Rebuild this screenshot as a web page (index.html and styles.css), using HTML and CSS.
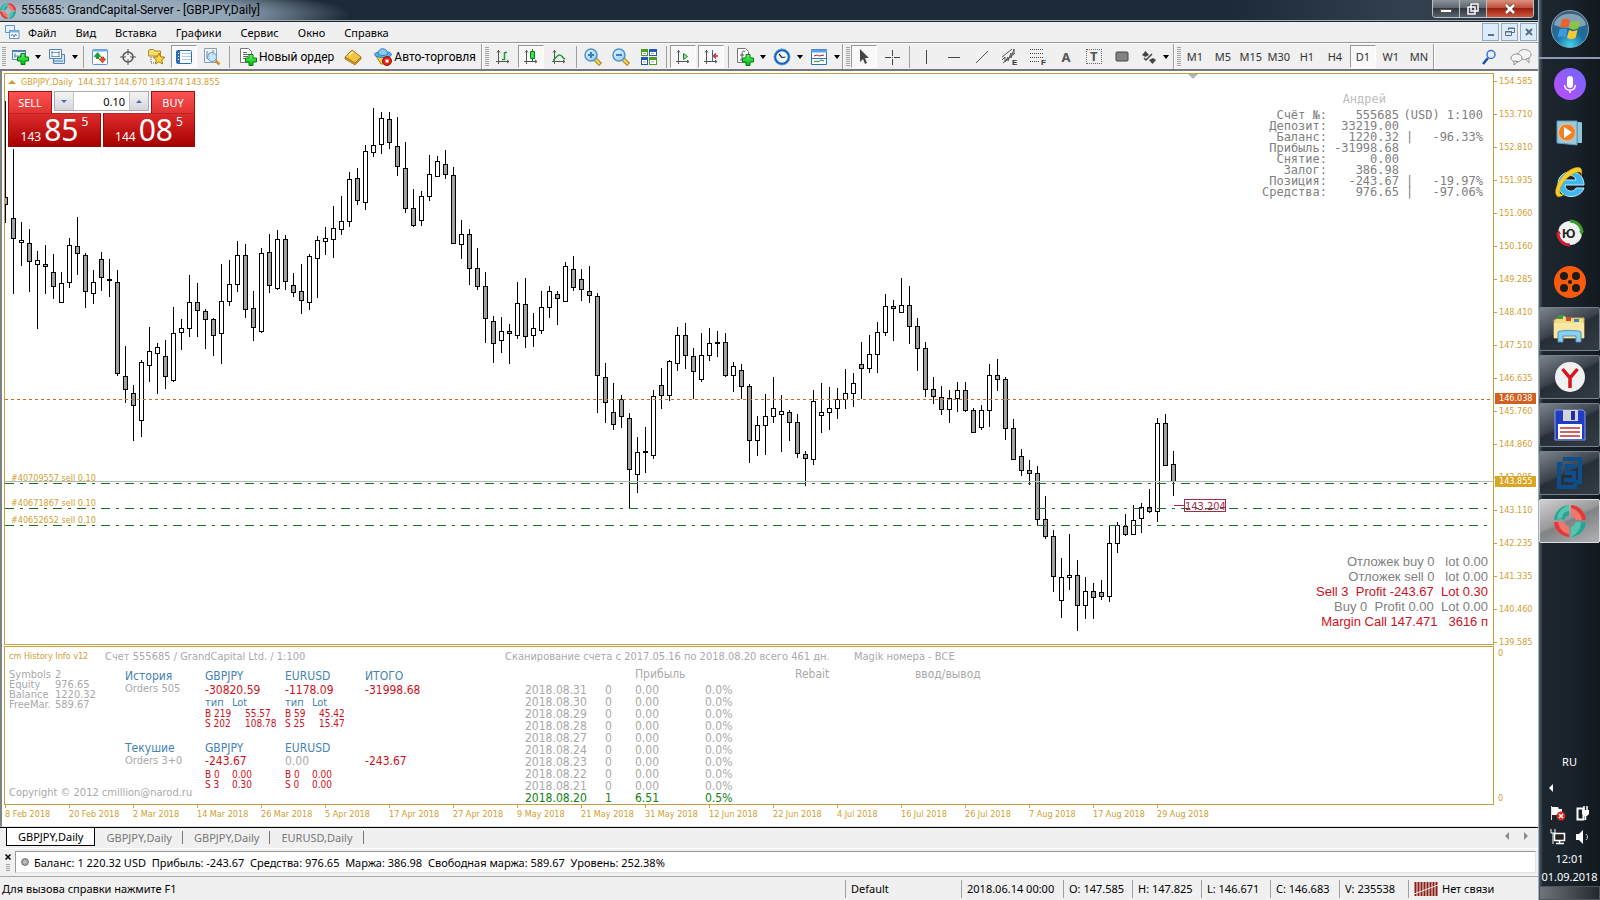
FILE: index.html
```html
<!DOCTYPE html>
<html lang="ru">
<head>
    <meta charset="UTF-8">
    <meta name="viewport" content="width=device-width, initial-scale=1.0">
    <title>555685: GrandCapital-Server - [GBPJPY,Daily]</title>
    <link rel="stylesheet" href="styles.css">
</head>
<body>
    <!-- shared drawings -->
    <svg class="defs" width="0" height="0" aria-hidden="true">
        <defs>
            <linearGradient id="plusFill" x1="0" y1="0" x2="0" y2="1"><stop offset="0" stop-color="#5dff5d"/><stop offset="1" stop-color="#00b418"/></linearGradient>
            <linearGradient id="lensFill" x1="0" y1="0" x2="1" y2="1"><stop offset="0" stop-color="#eaf7ff"/><stop offset="1" stop-color="#8cc8f4"/></linearGradient>
            <symbol id="logo" viewBox="0 0 32 32">
                <path d="M15 0A16 16 0 0 0 0 15l7-1 3 1a8 8 0 0 1 5-5z" fill="#27a398"/>
                <path d="M15 0C8 2 3 8 3 14l5-1a8 8 0 0 1 7-7z" fill="#54c4ae"/>
                <path d="M17 0a16 16 0 0 1 15 15H22a8 8 0 0 0-5-5z" fill="#f1766b"/>
                <path d="M17 0a16 16 0 0 1 15 15h-4C27 9 23 4 17 3z" fill="#dd3b3c"/>
                <path d="M32 17a16 16 0 0 1-15 15V22a8 8 0 0 0 5-5z" fill="#54c4ae"/>
                <path d="M32 17a16 16 0 0 1-15 15c6-3 10-8 10-15z" fill="#27a398"/>
                <path d="M0 17a16 16 0 0 0 15 15V22a8 8 0 0 1-5-5z" fill="#f1766b"/>
                <path d="M0 17a16 16 0 0 0 15 15v-3C9 28 5 23 4 17z" fill="#dd3b3c"/>
            </symbol>
            <symbol id="plus" viewBox="0 0 12 12">
                <path d="M4 .5h4V4h3.500v4H8v3.500H4V8H.5V4H4z" fill="url(#plusFill)" stroke="#087a14"/>
            </symbol>
            <symbol id="axes" viewBox="0 0 16 16">
                <path d="M3.500 1v14M1 12.500h13M2 3.500l1.500-2 1.500 2M12 11l2 1.500-2 1.500" fill="none" stroke="#555"/>
            </symbol>
        </defs>
    </svg>

    <div class="window">
        <header class="titlebar">
            <svg class="title-logo" width="16" height="16"><use href="#logo"/></svg>
            <h1>555685: GrandCapital-Server - [GBPJPY,Daily]</h1>
            <div class="window-buttons">
                <button type="button" aria-label="Свернуть"><svg width="12" height="12"><rect x=".5" y="6.500" width="11" height="3" fill="#fff" stroke="#555"/></svg></button>
                <button type="button" aria-label="Восстановить"><svg width="12" height="12"><path d="M4 1h7v7H4z M1 4h7v7H1z" fill="none" stroke="#445" stroke-width="3"/><path d="M4 1h7v7H4z M1 4h7v7H1z" fill="none" stroke="#fff" stroke-width="1.500"/></svg></button>
                <button type="button" class="close" aria-label="Закрыть"><svg width="12" height="10"><path d="M2 1l8 8M10 1L2 9" stroke="#533" stroke-width="4"/><path d="M2 1l8 8M10 1L2 9" stroke="#fff" stroke-width="2.500"/></svg></button>
            </div>
        </header>

        <nav class="menubar">
            <svg class="menu-icon" width="15" height="15"><path d="M.5.5h9v7h-9z" fill="#e6f2fd" stroke="#5d93c8"/><path d="M4.500 5.500h9.500v8H4.500z" fill="#fff" stroke="#5d93c8"/><path d="M5 6.500h9" stroke="#7fb0e0" stroke-width="2"/><path d="M6 11l1.500-2 1.500 3 1.500-3 1 2" fill="none" stroke="#4a7eb8"/></svg>
            <a href="#">Файл</a>
            <a href="#">Вид</a>
            <a href="#">Вставка</a>
            <a href="#">Графики</a>
            <a href="#">Сервис</a>
            <a href="#">Окно</a>
            <a href="#">Справка</a>
            <div class="mdi-buttons">
                <button type="button" aria-label="Свернуть окно"><svg width="10" height="10"><path d="M2 8h6" stroke="#5c6f82" stroke-width="2"/></svg></button>
                <button type="button" aria-label="Восстановить окно"><svg width="10" height="10"><path d="M3.500 3V1h6v4.500H7M.5 4.500h6v4h-6z" fill="none" stroke="#5c6f82"/><path d="M3 1.500h7M0 5h7" stroke="#5c6f82"/></svg></button>
                <button type="button" aria-label="Закрыть окно"><svg width="10" height="10"><path d="M2 2l6 6M8 2L2 8" stroke="#5c6f82" stroke-width="2"/></svg></button>
            </div>
        </nav>

        <div class="toolbar">
            <div class="band">
                <span class="grip"></span>
                <button type="button" class="tool drop" aria-label="Новый график"><svg width="18" height="18"><path d="M1.500 2.500h13v9h-13z" fill="#eef6fd" stroke="#4f83b8"/><path d="M1 3h14" stroke="#4f83b8" stroke-width="2"/><path d="M4 5v5M3 8h8M9 7l2 1-2 1" fill="none" stroke="#6a8aa8"/><use href="#plus" x="6" y="5" width="12" height="12"/></svg></button>
                <button type="button" class="tool drop" aria-label="Профили"><svg width="18" height="18"><path d="M5.500 6.500h11v9h-11z" fill="#cfe3f5" stroke="#4f83b8"/><path d="M1.500 1.500h12v9h-12z" fill="#f2f8fd" stroke="#4f83b8"/><path d="M4 3v6M11 3v6M3 4.500h9M3 8.500h9" stroke="#7a98b5"/><path d="M5 13h10" stroke="#4f83b8"/></svg></button>
                <span class="sep"></span>
                <button type="button" class="tool" aria-label="Обзор рынка"><svg width="16" height="16"><rect x=".5" y=".5" width="15" height="15" rx="1" fill="#fff" stroke="#5a9bd8"/><path d="M1 1.500h14" stroke="#6cb0ec" stroke-width="2"/><path d="M2 7.500l3.500-4 3.500 4H7v2H4v-2z" fill="#18a828" stroke="#0a6a14" stroke-width=".5"/><path d="M7 10l3.500 4 3.500-4h-2V8H9v2z" fill="#e8502c" stroke="#9c2a10" stroke-width=".5"/></svg></button>
                <button type="button" class="tool" aria-label="Окно данных"><svg width="16" height="16"><circle cx="8" cy="8" r="5" fill="none" stroke="#555" stroke-width="1.500"/><path d="M8 0v6M8 10v6M0 8h6M10 8h6" stroke="#555"/></svg></button>
                <button type="button" class="tool" aria-label="Навигатор"><svg width="18" height="18"><path d="M1.500 8V3l1-1.500h4L8 3h5.500v5z" fill="#f7dc72" stroke="#b08a20"/><path d="M4 9v6h5" fill="none" stroke="#555" stroke-dasharray="1 1"/><path d="M12 5l1.700 3.800 4.100.4-3.100 2.700.9 4.100-3.600-2.200L8.400 16l.9-4.100-3.100-2.700 4.100-.4z" fill="#ffd93b" stroke="#a87a10"/></svg></button>
                <button type="button" class="tool pressed" aria-label="Терминал"><svg width="16" height="16"><rect x=".5" y="1.500" width="15" height="13" rx="1" fill="#fff" stroke="#2b6cb8"/><path d="M2.500 2v12" stroke="#2b6cb8" stroke-width="3"/><path d="M6 4.500h9M6 7.500h9M6 10.500h9" stroke="#a9cdf0"/><path d="M2 4.500h1M2 7.500h1M2 10.500h1" stroke="#fff"/></svg></button>
                <button type="button" class="tool" aria-label="Тестер стратегий"><svg width="18" height="18"><path d="M1.500.5h12v14h-12z" fill="#eef4fa" stroke="#8a9db2"/><path d="M4 3v8M6 5v7M10 2v5" stroke="#6b8196"/><circle cx="9" cy="9" r="4.500" fill="#bfe0f8" fill-opacity=".8" stroke="#6a9cc6"/><path d="M12.500 12.500l4 4" stroke="#c9922a" stroke-width="2.500"/></svg></button>
                <span class="sep"></span>
                <button type="button" class="tool wide"><svg width="18" height="18"><path d="M1.500.5h8l3 3v11h-11z" fill="#fff" stroke="#777"/><path d="M4 4.500h4M4 6.500h6M4 8.500h5M4 10.500h3" stroke="#666"/><use href="#plus" x="6" y="6" width="12" height="12"/></svg>Новый ордер</button>
                <button type="button" class="tool" aria-label="MetaEditor"><svg width="18" height="18"><path d="M1 9l7-7 9 7-6 6z" fill="#f3c548" stroke="#a8761a"/><path d="M1 9v2l10 6 6-6V9l-6 6z" fill="#d99a28" stroke="#9a6a18" stroke-width=".7"/><path d="M5 7l4-3" stroke="#fff3b8" stroke-width="1.500"/></svg></button>
                <button type="button" class="tool wide"><svg width="18" height="18"><path d="M2 8h14l-5 8H7z" fill="#f5cf52" stroke="#a87e1a"/><ellipse cx="9" cy="6.500" rx="8.500" ry="3" fill="#5fb4e6" stroke="#2f7fb8"/><path d="M4 6c0-7 9-7 10 0-3 2-7 2-10 0z" fill="#86cdf3" stroke="#2f7fb8"/><circle cx="13" cy="13" r="4.500" fill="#dc2418" stroke="#9c1008"/><path d="M11.500 11.500h3v3h-3z" fill="#fff"/></svg>Авто-торговля</button>
            </div>
            <div class="band">
                <span class="grip"></span>
                <button type="button" class="tool" aria-label="Бары"><svg width="16" height="16"><use href="#axes" width="16" height="16"/><path d="M9.500 3v8M7 10.500h2.500M10 3.500h2" stroke="#1c9c2c" stroke-width="1.500"/></svg></button>
                <button type="button" class="tool pressed" aria-label="Японские свечи"><svg width="16" height="16"><use href="#axes" width="16" height="16"/><path d="M9.500 0v12" stroke="#117a1c"/><path d="M7.500 2.500h4v7h-4z" fill="#3fe050" stroke="#117a1c"/></svg></button>
                <button type="button" class="tool" aria-label="Линия"><svg width="16" height="16"><use href="#axes" width="16" height="16"/><path d="M2 11c3-1 4-6 7-5 2 0 2 3 5 4" fill="none" stroke="#1c9c2c" stroke-width="1.500"/></svg></button>
                <span class="sep"></span>
                <button type="button" class="tool" aria-label="Увеличить"><svg width="18" height="18"><path d="M11 11l5.500 5.500" stroke="#8a6a1a" stroke-width="4"/><path d="M11 11l5 5" stroke="#f4d24a" stroke-width="2.500"/><circle cx="7" cy="7" r="6" fill="url(#lensFill)" stroke="#4f93cc" stroke-width="1.500"/><path d="M4 7h6M7 4v6" stroke="#3a7fc0" stroke-width="2"/></svg></button>
                <button type="button" class="tool" aria-label="Уменьшить"><svg width="18" height="18"><path d="M11 11l5.500 5.500" stroke="#8a6a1a" stroke-width="4"/><path d="M11 11l5 5" stroke="#f4d24a" stroke-width="2.500"/><circle cx="7" cy="7" r="6" fill="url(#lensFill)" stroke="#4f93cc" stroke-width="1.500"/><path d="M4 7h6" stroke="#3a7fc0" stroke-width="2"/></svg></button>
                <button type="button" class="tool" aria-label="Расположить окна"><svg width="18" height="18"><path d="M1 1h7v7H1zM9 9h8v8H9z" fill="#4a9e22"/><path d="M9 1h8v7H9zM1 9h7v8H1z" fill="#2456b8"/><path d="M2 4h5v3H2zM10 4h6v3h-6zM2 12h5v4H2zM10 12h6v4h-6z" fill="#fff"/><path d="M3 5.500h3M11 5.500h3M3 14h3M11 14h3" stroke="#9ac"/></svg></button>
                <span class="sep"></span>
                <button type="button" class="tool pressed" aria-label="Автопрокрутка"><svg width="16" height="16"><use href="#axes" width="16" height="16"/><path d="M8.500 4.500v6l4-3z" fill="#7cf08a" stroke="#128a20"/></svg></button>
                <button type="button" class="tool pressed" aria-label="Сдвиг графика"><svg width="16" height="16"><use href="#axes" width="16" height="16"/><path d="M9.500 1v11" stroke="#2a6ab0"/><path d="M15 7h-4M13 4.500L10.500 7l2.500 2.500" stroke="#c83414" stroke-width="1.500" fill="none"/></svg></button>
                <span class="sep"></span>
                <button type="button" class="tool drop" aria-label="Индикаторы"><svg width="18" height="18"><path d="M1.500.5h8l3 3v11h-11z" fill="#fff" stroke="#777"/><path d="M9 3.500c-2-1-3 0-3 2v6M4 7h4M4 12h4" fill="none" stroke="#555"/><use href="#plus" x="6" y="6" width="12" height="12"/></svg></button>
                <button type="button" class="tool drop" aria-label="Периоды"><svg width="18" height="18"><circle cx="9" cy="9" r="7" fill="#f2f8ff" stroke="#1a62b8" stroke-width="2.500"/><circle cx="9" cy="9" r="8" fill="none" stroke="#5ab0f4" stroke-width=".8"/><path d="M6 6l3 3.500L12.500 9" fill="none" stroke="#333" stroke-width="1.200"/></svg></button>
                <button type="button" class="tool drop" aria-label="Шаблоны"><svg width="18" height="18"><path d="M1.500 1.500h15v15h-15z" fill="#fff" stroke="#2d72be"/><path d="M1 3h16" stroke="#5aa2e8" stroke-width="3"/><path d="M4 8l3-1 2 1 5-1" fill="none" stroke="#a02818"/><path d="M2 10.500h14" stroke="#2d72be"/><path d="M4 14l2-1 2 1 3-2 3 1" fill="none" stroke="#1a8a2a"/></svg></button>
            </div>
            <div class="band">
                <span class="grip"></span>
                <button type="button" class="tool pressed" aria-label="Курсор"><svg width="12" height="16"><path d="M2 0v13l3-3 2 5 2-1-2-5h4z" fill="#444"/></svg></button>
                <button type="button" class="tool" aria-label="Перекрестие"><svg width="16" height="16"><path d="M8.500 1v6M8.500 10v6M1 8.500h6M10 8.500h6M8 8.500h1" stroke="#444"/></svg></button>
                <span class="sep"></span>
                <button type="button" class="tool" aria-label="Вертикальная линия"><svg width="14" height="14"><path d="M7.500 0v14" stroke="#444"/></svg></button>
                <button type="button" class="tool" aria-label="Горизонтальная линия"><svg width="14" height="14"><path d="M1 7.500h12" stroke="#444"/></svg></button>
                <button type="button" class="tool" aria-label="Трендовая линия"><svg width="14" height="14"><path d="M1 13L13 1" stroke="#555"/></svg></button>
                <button type="button" class="tool" aria-label="Канал"><svg width="18" height="18"><path d="M1 9L11 1M2 15L14 5M1 12l3-3v5l3-5v4l3-8v5l3-9v5" fill="none" stroke="#555"/><text x="11" y="17" class="glyph">E</text></svg></button>
                <button type="button" class="tool" aria-label="Фибоначчи"><svg width="18" height="18"><path d="M1 1.500h14M1 5.500h14M1 9.500h14M1 13.500h9" stroke="#444" stroke-dasharray="1 1"/><text x="12" y="17" class="glyph">F</text></svg></button>
                <button type="button" class="tool letter" aria-label="Текст">A</button>
                <button type="button" class="tool letter" aria-label="Метка"><span class="label-box">T</span></button>
                <button type="button" class="tool" aria-label="Прямоугольник"><svg width="14" height="12"><rect x="1" y="1" width="12" height="9" rx="1" fill="#828282" stroke="#444"/></svg></button>
                <button type="button" class="tool drop" aria-label="Стрелки"><svg width="16" height="16"><path d="M1 6l3.500-4L8 6l-3.500 2zM8 11l3.500 4 3.500-4-3-2z" fill="#444"/><path d="M3 9l2 2 6-6" fill="none" stroke="#444" stroke-width="1.500"/></svg></button>
            </div>
            <div class="band">
                <span class="grip"></span>
                <button type="button" class="tool">M1</button>
                <button type="button" class="tool">M5</button>
                <button type="button" class="tool">M15</button>
                <button type="button" class="tool">M30</button>
                <button type="button" class="tool">H1</button>
                <button type="button" class="tool">H4</button>
                <button type="button" class="tool pressed">D1</button>
                <button type="button" class="tool">W1</button>
                <button type="button" class="tool">MN</button>
            </div>
            <div class="toolbar-end">
                <button type="button" aria-label="Поиск"><svg width="14" height="16"><path d="M6 9L1 15" stroke="#1d4fb0" stroke-width="2.500"/><circle cx="9" cy="5.500" r="4" fill="#e4f0fc" stroke="#3a74cc" stroke-width="1.500"/></svg></button>
                <button type="button" aria-label="Чат"><svg width="22" height="18"><ellipse cx="14.500" cy="6.500" rx="6.500" ry="5" fill="#f4f4f4" stroke="#999"/><path d="M16 11l3 4v-5z" fill="#f4f4f4" stroke="#999"/><ellipse cx="6.500" cy="10" rx="5.500" ry="4" fill="#fafafa" stroke="#8a8a8a"/><path d="M4 13v4l4-3.500z" fill="#fafafa" stroke="#8a8a8a"/></svg></button>
            </div>
        </div>

        <main class="workspace">
            <section class="pane price-pane">
                <svg class="chart" id="chart" role="img" aria-label="GBPJPY, Daily"></svg>
                <p class="symbol-line"><span class="up"></span>GBPJPY,Daily&nbsp; 144.317 144.670 143.474 143.855</p>
                <span class="shift-mark"></span>

                <form class="one-click">
                    <button type="button" class="side">SELL</button>
                    <div class="volume">
                        <button type="button" class="spin down" aria-label="Меньше"></button>
                        <input type="text" value="0.10" aria-label="Объём">
                        <button type="button" class="spin plus" aria-label="Больше"></button>
                    </div>
                    <button type="button" class="side buy">BUY</button>
                    <button type="button" class="quote" aria-label="Sell 143.855"><small>143</small><b>85</b><sup>5</sup></button>
                    <button type="button" class="quote ask" aria-label="Buy 144.085"><small>144</small><b>08</b><sup>5</sup></button>
                </form>

                <table class="account">
                    <caption>Андрей</caption>
                    <tr><th>Счёт №:</th><td>555685</td><td class="rest">(USD) 1:100</td></tr>
                    <tr><th>Депозит:</th><td>33219.00</td><td></td></tr>
                    <tr><th>Баланс:</th><td>1220.32</td><td class="rest"><i>|</i>-96.33%</td></tr>
                    <tr><th>Прибыль:</th><td>-31998.68</td><td></td></tr>
                    <tr><th>Снятие:</th><td>0.00</td><td></td></tr>
                    <tr><th>Залог:</th><td>386.98</td><td></td></tr>
                    <tr><th>Позиция:</th><td>-243.67</td><td class="rest"><i>|</i>-19.97%</td></tr>
                    <tr><th>Средства:</th><td>976.65</td><td class="rest"><i>|</i>-97.06%</td></tr>
                </table>

                <div class="totals">
                    <p>Отложек buy 0   lot 0.00</p>
                    <p>Отложек sell 0   lot 0.00</p>
                    <p class="loss">Sell 3  Profit -243.67  Lot 0.30</p>
                    <p>Buy 0  Profit 0.00  Lot 0.00</p>
                    <p class="loss">Margin Call 147.471   3616 п</p>
                </div>
            </section>

            <div class="scale">
                <ol>
                    <li>154.585</li><li>153.710</li><li>152.810</li><li>151.935</li><li>151.060</li><li>150.160</li>
                    <li>149.285</li><li>148.410</li><li>147.510</li><li>146.635</li><li>145.760</li><li>144.860</li>
                    <li>143.985</li><li>143.110</li><li>142.235</li><li>141.335</li><li>140.460</li><li>139.585</li>
                </ol>
                <span class="tag ask">146.038</span>
                <span class="tag bid">143.855</span>
            </div>

            <section class="pane info-pane">
                <div class="info-head">
                    <span class="name">cm History Info v12</span>
                    <span class="acc">Счет 555685 / GrandCapital Ltd. / 1:100</span>
                    <span class="scan">Сканирование счета с 2017.05.16 по 2018.08.20 всего 461 дн.</span>
                    <span>Magik номера - ВСЕ</span>
                </div>
                <div class="info-body">
                    <div class="summary">
                        <dl>
                            <dt>Symbols</dt><dd>2</dd>
                            <dt>Equity</dt><dd>976.65</dd>
                            <dt>Balance</dt><dd>1220.32</dd>
                            <dt>FreeMar.</dt><dd>589.67</dd>
                        </dl>
                        <p>Copyright © 2012 cmillion@narod.ru</p>
                    </div>
                    <div class="orders">
                        <div class="group">
                            <div><h2>История</h2><p class="count">Orders 505</p></div>
                            <div>
                                <h2>GBPJPY</h2><p class="loss">-30820.59</p>
                                <p class="type"><span>тип</span>Lot</p>
                                <p class="lots"><span>B 219</span>55.57</p>
                                <p class="lots"><span>S 202</span>108.78</p>
                            </div>
                            <div>
                                <h2>EURUSD</h2><p class="loss">-1178.09</p>
                                <p class="type"><span>тип</span>Lot</p>
                                <p class="lots"><span class="mid">B 59</span>45.42</p>
                                <p class="lots"><span class="mid">S 25</span>15.47</p>
                            </div>
                            <div><h2>ИТОГО</h2><p class="loss">-31998.68</p></div>
                        </div>
                        <div class="group current-orders">
                            <div><h2>Текушие</h2><p class="count">Orders 3+0</p></div>
                            <div>
                                <h2>GBPJPY</h2><p class="loss">-243.67</p>
                                <p class="lots first"><span class="short">B 0</span>0.00</p>
                                <p class="lots"><span class="short">S 3</span>0.30</p>
                            </div>
                            <div>
                                <h2>EURUSD</h2><p>0.00</p>
                                <p class="lots first"><span class="short">B 0</span>0.00</p>
                                <p class="lots"><span class="short">S 0</span>0.00</p>
                            </div>
                            <div><h2>&nbsp;</h2><p class="loss">-243.67</p></div>
                        </div>
                    </div>
                    <table class="days">
                        <thead>
                            <tr><th class="c-date"></th><th class="c-num"></th><th class="c-sum">Прибыль</th><th class="c-pct"></th><th class="c-reb">Rebait</th><th>ввод/вывод</th></tr>
                        </thead>
                        <tbody>
                            <tr><td>2018.08.31</td><td>0</td><td>0.00</td><td>0.0%</td></tr>
                            <tr><td>2018.08.30</td><td>0</td><td>0.00</td><td>0.0%</td></tr>
                            <tr><td>2018.08.29</td><td>0</td><td>0.00</td><td>0.0%</td></tr>
                            <tr><td>2018.08.28</td><td>0</td><td>0.00</td><td>0.0%</td></tr>
                            <tr><td>2018.08.27</td><td>0</td><td>0.00</td><td>0.0%</td></tr>
                            <tr><td>2018.08.24</td><td>0</td><td>0.00</td><td>0.0%</td></tr>
                            <tr><td>2018.08.23</td><td>0</td><td>0.00</td><td>0.0%</td></tr>
                            <tr><td>2018.08.22</td><td>0</td><td>0.00</td><td>0.0%</td></tr>
                            <tr><td>2018.08.21</td><td>0</td><td>0.00</td><td>0.0%</td></tr>
                            <tr class="gain"><td>2018.08.20</td><td>1</td><td>6.51</td><td>0.5%</td></tr>
                        </tbody>
                    </table>
                </div>
            </section>

            <div class="scale info-scale"><span>0</span><span>0</span></div>

            <ol class="dates">
                <li>8 Feb 2018</li><li>20 Feb 2018</li><li>2 Mar 2018</li><li>14 Mar 2018</li><li>26 Mar 2018</li>
                <li>5 Apr 2018</li><li>17 Apr 2018</li><li>27 Apr 2018</li><li>9 May 2018</li><li>21 May 2018</li>
                <li>31 May 2018</li><li>12 Jun 2018</li><li>22 Jun 2018</li><li>4 Jul 2018</li><li>16 Jul 2018</li>
                <li>26 Jul 2018</li><li>7 Aug 2018</li><li>17 Aug 2018</li><li>29 Aug 2018</li>
            </ol>
        </main>

        <div class="tabs">
            <button type="button" class="tab active">GBPJPY,Daily</button>
            <button type="button" class="tab">GBPJPY,Daily</button>
            <button type="button" class="tab">GBPJPY,Daily</button>
            <button type="button" class="tab">EURUSD,Daily</button>
            <div class="tab-scroll">
                <button type="button" aria-label="Назад"><svg width="6" height="8"><path d="M5 0v8L1 4z" fill="#8c8c8c"/></svg></button>
                <button type="button" aria-label="Вперёд"><svg width="6" height="8"><path d="M1 0v8l4-4z" fill="#8c8c8c"/></svg></button>
            </div>
        </div>

        <div class="terminal">
            <div class="terminal-side">
                <button type="button" aria-label="Закрыть терминал"><svg width="6" height="6"><path d="M.5.5l5 5M5.500.5l-5 5" stroke="#000" stroke-width="1.500"/></svg></button>
                <span class="lines"></span>
            </div>
            <div class="balance"><span class="dot"></span>Баланс: 1 220.32 USD  Прибыль: -243.67  Средства: 976.65  Маржа: 386.98  Свободная маржа: 589.67  Уровень: 252.38%</div>
        </div>

        <footer class="statusbar">
            <span class="help">Для вызова справки нажмите F1</span>
            <span class="cell profile">Default</span>
            <span class="cell time">2018.06.14 00:00</span>
            <span class="cell">O: 147.585</span>
            <span class="cell">H: 147.825</span>
            <span class="cell">L: 146.671</span>
            <span class="cell">C: 146.683</span>
            <span class="cell">V: 235538</span>
            <span class="cell link"><svg width="24" height="14"><path d="M1.500 0v14M4.500 0v14M7.500 0v14M10.500 0v14M13.500 0v14M16.500 0v14M19.500 0v14M22.500 0v14" stroke="#8c1c10" stroke-width="2"/><path d="M0 12L24 3" stroke="#f0f0f0"/></svg>Нет связи</span>
        </footer>
    </div>

    <aside class="taskbar">
        <button type="button" class="start" aria-label="Пуск"><svg width="40" height="40">
            <defs><radialGradient id="orb" cx=".5" cy=".95" r=".9"><stop offset="0" stop-color="#3fd4f4"/><stop offset=".45" stop-color="#1c6d9c"/><stop offset="1" stop-color="#3d5f7c"/></radialGradient></defs>
            <circle cx="20" cy="20" r="18.500" fill="url(#orb)" stroke="#7fa4bc"/>
            <path d="M4 16C7 1 33 1 36 16 26 20 14 20 4 16z" fill="#fff" opacity=".4"/>
            <path d="M12 11c3-2 5-1.500 8 0l-2 8c-3-1.500-5-1.500-8 0z" fill="#f0602a"/>
            <path d="M21.500 11.500c3 1.500 5 1.500 8.500 0l-2 8c-3 1.500-5.500 1.500-8.500 0z" fill="#8cc43c"/>
            <path d="M9.500 20.500c3-1.500 5-1.500 8 0l-2 8c-3-1.500-5-1.500-8 0z" fill="#3a9be0"/>
            <path d="M19 21c3 1.500 5 1.500 8.500 0l-2 8c-3 1.500-5.500 1.500-8.500 0z" fill="#fbc92e"/>
        </svg></button>
        <div class="pinned">
            <button type="button" class="alice" aria-label="Алиса"><svg width="32" height="32">
                <defs><linearGradient id="mic" x1="0" y1="1" x2="1" y2="0"><stop offset="0" stop-color="#c04dff"/><stop offset="1" stop-color="#6a68ff"/></linearGradient></defs>
                <circle cx="16" cy="16" r="16" fill="url(#mic)"/><rect x="13" y="8" width="6" height="12" rx="3" fill="#fff"/><path d="M10.500 17c1 7 10 7 11 0M16 22v3" fill="none" stroke="#fff" stroke-width="1.500"/>
            </svg></button>
            <button type="button" aria-label="Проигрыватель"><svg width="28" height="26"><path d="M18 2h8v21h-8z" fill="#5aa6c8"/><path d="M23 2v21M25 3v20" stroke="#c4e6f4"/><path d="M1 1h20v24L1 23z" fill="#9cc8dc" stroke="#5f9cb8"/><circle cx="11" cy="12.500" r="8.500" fill="#f08028" stroke="#f8c08a"/><path d="M8 7v11l8-5.500z" fill="#fff"/></svg></button>
            <button type="button" aria-label="Internet Explorer"><svg width="32" height="32"><path d="M30 18H11c0 7 9 8 11 3h8C26 33 5 33 4 17 4 1 30 0 30 18zM11 13h11c-1-6-10-6-11 0z" fill="#3fb8ee" stroke="#bfeaff" fill-rule="evenodd"/><path d="M27 9C31-3 20-1 12 6 4 13-1 25 3 29c2 2 5 0 8-2-4 1-6 0-5-4 1-6 7-13 13-16 5-3 9-3 8 2z" fill="#f8ce2c" stroke="#b88a10" stroke-width=".5"/></svg></button>
            <button type="button" aria-label="Юла"><svg width="28" height="28"><circle cx="14" cy="14" r="12" fill="#f2f2f2"/><path d="M14 2a12 12 0 0 1 12 11" fill="none" stroke="#3a9a2c" stroke-width="3"/><path d="M23 12h5l-2.500 4z" fill="#3a9a2c"/><path d="M14 26A12 12 0 0 1 2 15" fill="none" stroke="#d02030" stroke-width="3"/><path d="M0 15h5l-2.500-4z" fill="#d02030"/><text x="6" y="19" class="yu">Ю</text></svg></button>
            <button type="button" aria-label="Видео"><svg width="32" height="32"><circle cx="16" cy="16" r="16" fill="#fb5a0c"/><g fill="#1c1c1c"><circle cx="10" cy="10" r="4"/><circle cx="22" cy="10" r="4"/><circle cx="10" cy="22" r="4"/><circle cx="22" cy="22" r="4"/><circle cx="16" cy="16" r="2"/></g></svg></button>
        </div>
        <div class="running">
            <button type="button" aria-label="Проводник"><svg width="34" height="30"><path d="M1 6l10-4 3 2h17v20H1z" fill="#f3dc86" stroke="#c8a848"/><path d="M5 1h5v4H5z" fill="#3a9a3a"/><path d="M13 3h5v4h-5z" fill="#c85028"/><path d="M21 5h5v3h-5z" fill="#3a8ac0"/><path d="M1 9h30v15H1z" fill="#f8e8a4"/><path d="M5 28V18c0-2 23-2 23 0v10h-5v-6H10v6z" fill="#8cd0f0" stroke="#4a94c0"/></svg></button>
            <button type="button" aria-label="Яндекс Браузер"><svg width="32" height="32"><circle cx="16" cy="16" r="15" fill="#f1f1f1"/><path d="M8.500 8L16 17v10M23.500 8L16 17" fill="none" stroke="#d8141c" stroke-width="3.500"/></svg></button>
            <button type="button" aria-label="Total Commander"><svg width="32" height="32"><path d="M1 1h28l2 2v28H1z" fill="#1f3cc4" stroke="#8c9ce0"/><path d="M9 1h15v11H9z" fill="#d4d4d8"/><path d="M17 2h4v9h-4z" fill="#1c2f9c"/><path d="M4 15h24v15H4z" fill="#fff"/><path d="M6 19h20M6 23h20M6 27h20" stroke="#c02c34" stroke-width="1.500"/></svg></button>
            <button type="button" aria-label="S3"><svg width="28" height="34"><path d="M7 3h17v23h-5M19 27v4H3V8h4" fill="none" stroke="#0d4f8c" stroke-width="4"/><path d="M20 10h-9v7h7v7H8" fill="none" stroke="#0d4f8c" stroke-width="4"/></svg></button>
            <button type="button" class="current" aria-label="GrandCapital"><svg width="32" height="32"><use href="#logo"/></svg></button>
        </div>
        <div class="tray">
            <span class="lang">RU</span>
            <button type="button" class="more" aria-label="Скрытые значки"><svg width="5" height="8"><path d="M5 0v8L1 4z" fill="#fff"/></svg></button>
            <div class="tray-icons">
                <svg width="16" height="16"><path d="M1.500 1v14" stroke="#ddd"/><path d="M2 2h6l1 2h3v6H2z" fill="#fff"/><circle cx="11" cy="11" r="4.500" fill="#d8281c"/><path d="M9 9l4 4M13 9l-4 4" stroke="#fff" stroke-width="1.500"/></svg>
                <svg width="16" height="16"><path d="M3.500 3.500h6v11h-6z" fill="none" stroke="#fff" stroke-width="2"/><path d="M8 5h7v4l-2 2h-3L8 9z" fill="#fff"/><path d="M10 1v4M13 1v4M11.500 10v5" stroke="#fff" stroke-width="1.500"/></svg>
                <svg width="16" height="16"><path d="M4.500 4.500h10v7h-10z" fill="#222" stroke="#fff" stroke-width="1.500"/><path d="M6 14.500h8M9.500 12v3" stroke="#fff" stroke-width="1.500"/><path d="M1 0v4h4V0M3 4v11" fill="none" stroke="#fff"/></svg>
                <svg width="16" height="16"><path d="M2 5h3l4-4v14l-4-4H2z" fill="#fff"/><path d="M12 5c2 2 2 4 0 6" fill="none" stroke="#ccc"/></svg>
            </div>
            <time>12:01</time>
            <time>01.09.2018</time>
        </div>
        <button type="button" class="desktop" aria-label="Свернуть все окна"></button>
    </aside>

    <script src="chart.js"></script>
</body>
</html>
```
FILE: styles.css
```css
* {
    box-sizing: border-box;
}

body {
    margin: 0;
    height: 100vh;
    display: flex;
    overflow: hidden;
    background: #1a232b;
    color: #000;
    font-family: "Noto Sans", sans-serif;
    font-size: 11px;
}

p, h1, h2, ol, dl, dd {
    margin: 0;
    padding: 0;
    font-size: inherit;
    font-weight: normal;
}

ol {
    list-style: none;
}

button {
    display: flex;
    align-items: center;
    justify-content: center;
    margin: 0;
    padding: 0;
    border: 0;
    background: none;
    color: inherit;
    font: inherit;
}

.defs {
    position: absolute;
}

.window {
    flex: 1;
    min-width: 0;
    display: flex;
    flex-direction: column;
    background: #f0f0f0;
}

/* title and menu */
.titlebar {
    flex: none;
    height: 21px;
    display: flex;
    align-items: flex-start;
    background:
        radial-gradient(ellipse 290px 30px at 60px 14px, #b4c4d2 0%, #90a3b4 60%, rgba(60, 78, 96, 0) 100%),
        linear-gradient(to right, #45596c 0, #1d2a37 20%, #1d2a37 80%, #34424f 92%, #1d2a37 100%);
    border-bottom: 1px solid #a8adb2;
}

.title-logo {
    margin: 3px 5px 0 0;
}

.titlebar h1 {
    flex: 1;
    font-family: Roboto, sans-serif;
    font-size: 12px;
    line-height: 21px;
}

.window-buttons {
    display: flex;
    margin-right: 4px;
    border: 1px solid #b9c0c6;
    border-top: 0;
    border-radius: 0 0 4px 4px;
    overflow: hidden;
}

.window-buttons button {
    width: 27px;
    height: 17px;
    background: linear-gradient(#8c9299, #5f676f 45%, #30373f 50%, #59616a);
    border-right: 1px solid #b9c0c6;
}

.window-buttons .close {
    width: 46px;
    border-right: 0;
    background: linear-gradient(#d9917f, #c2513c 45%, #9c2010 50%, #d0553c);
}

.menubar {
    flex: none;
    height: 22px;
    display: flex;
    align-items: center;
    gap: 19px;
    padding: 0 1px 0 5px;
    border-top: 1px solid #1c242c;
    border-bottom: 1px solid #9a9a9a;
}

.menubar a {
    color: #000;
    text-decoration: none;
}

.menu-icon {
    margin-right: -11px;
}

.mdi-buttons {
    display: flex;
    gap: 2px;
    margin-left: auto;
}

.mdi-buttons button {
    width: 17px;
    height: 18px;
    background: #dcebf9;
    border: 1px solid #93a9be;
}

/* toolbar */
.toolbar {
    flex: none;
    height: 28px;
    display: flex;
    align-items: stretch;
    border-top: 1px solid #fff;
    border-bottom: 2px solid #77777d;
}

.band {
    display: flex;
    align-items: center;
    padding-left: 2px;
    border-right: 1px solid #9c9c9c;
    box-shadow: 1px 0 0 #fff;
}

.band + .band {
    padding-left: 3px;
}

.grip {
    width: 4px;
    height: 20px;
    background: repeating-linear-gradient(#a4a4a4 0 1px, #f0f0f0 1px 2px);
}

.tool {
    flex: none;
    width: 26px;
    height: 23px;
    margin: 0 1px;
    color: #333;
}

.tool.pressed {
    background: #f9f9f9;
    border: 1px solid #fff;
    border-top-color: #999;
    border-left-color: #999;
}

.tool.drop {
    width: 35px;
    justify-content: flex-start;
    padding-left: 4px;
}

.tool.drop::after {
    content: "";
    margin-left: 6px;
    border: 3px solid transparent;
    border-top: 4px solid #000;
    border-bottom: 0;
}

.tool.wide {
    width: auto;
    gap: 2px;
    padding: 0 4px 0 6px;
    color: #000;
    font-family: Roboto, sans-serif;
    font-size: 12px;
}

.tool.letter {
    font-size: 13px;
    font-weight: bold;
    color: #555;
}

.label-box {
    padding: 0 3px;
    border: 1px dotted #666;
    line-height: 13px;
}

.glyph {
    font: bold 8px "Liberation Sans", sans-serif;
    fill: #333;
}

.sep {
    width: 1px;
    height: 22px;
    margin: 0 2px 0 3px;
    background: #a0a0a0;
}

.toolbar-end {
    display: flex;
    gap: 14px;
    margin-left: auto;
    padding-right: 6px;
}

/* chart */
.workspace {
    flex: 1;
    min-height: 0;
    display: grid;
    grid-template-columns: minmax(0, 1fr) 44px;
    grid-template-rows: minmax(0, 1fr) 159px 21px;
    padding: 2px 0 0 2px;
    background: #fff;
    border-left: 2px solid #7d8287;
    border-bottom: 1px solid #e2e2e2;
    color: #a9a9a9;
    font-family: "DejaVu Sans Condensed", "DejaVu Sans", sans-serif;
}

.pane {
    position: relative;
    border: 1px solid #c9a03c;
    overflow: hidden;
}

.price-pane {
    margin-bottom: 1px;
}

.chart {
    position: absolute;
    inset: 0;
    width: 100%;
    height: 100%;
}

.order-label {
    font-size: 9px;
    fill: #d0a030;
}

.arrow-label {
    font-size: 11px;
    fill: #a82848;
}

.symbol-line {
    position: absolute;
    top: 2px;
    left: 3px;
    display: flex;
    align-items: center;
    gap: 5px;
    color: #d0a030;
    font-size: 9px;
    line-height: 12px;
}

.up {
    border: 4px solid transparent;
    border-top: 0;
    border-bottom-color: #c9a03c;
}

.shift-mark {
    position: absolute;
    top: 0;
    left: 1183px;
    border: 5px solid transparent;
    border-top-color: #b4b4b4;
    border-bottom: 0;
}

.one-click {
    position: absolute;
    top: 17px;
    left: 3px;
    display: grid;
    grid-template-columns: 44px 49px 2px 48px 44px;
    grid-template-rows: 22px 34px;
    color: #fff;
    font-family: "Noto Sans", sans-serif;
}

.side {
    background: linear-gradient(#fb5252, #e23434);
    border: 1px solid #a01010;
    border-bottom: 0;
}

.side.buy {
    grid-column: 5;
}

.volume {
    grid-column: 2 / 5;
    display: flex;
    height: 20px;
    margin: 0 2px;
    border: 1px solid #a8a8b0;
}

.volume input {
    width: 100%;
    min-width: 0;
    padding: 0 4px;
    border: 1px solid #c4c4c8;
    border-width: 0 1px;
    background: #fff;
    text-align: right;
    font: 11px "Noto Sans", sans-serif;
}

.spin {
    flex: none;
    width: 18px;
    background: linear-gradient(#f4f4f4, #d4d6dc);
}

.spin::before {
    content: "";
    border: 3px solid transparent;
}

.spin.down::before {
    border-top-color: #5666a8;
    border-bottom: 0;
}

.spin.plus::before {
    border-bottom-color: #5666a8;
    border-top: 0;
}

.quote {
    grid-column: 1 / 3;
    align-items: flex-end;
    gap: 3px;
    background: linear-gradient(#dc2c2c, #a80000);
    border: 1px solid #960c0c;
    border-top-color: #c02020;
}

.quote.ask {
    grid-column: 4 / 6;
}

.quote small {
    font-size: 12px;
    line-height: 19px;
}

.quote b {
    font-size: 30px;
    font-weight: normal;
    line-height: 32px;
}

.quote sup {
    align-self: flex-start;
    font-size: 12px;
    line-height: 15px;
}

.account {
    position: absolute;
    top: 20px;
    right: 10px;
    border-collapse: collapse;
    color: #808080;
    font: 12px/11px "DejaVu Sans Mono", monospace;
}

.account caption {
    padding: 0 97px 5px 0;
    color: #c0c0c0;
    text-align: right;
}

.account th,
.account td {
    height: 11px;
    padding: 0;
    font-weight: normal;
    text-align: right;
}

.account td {
    width: 72px;
}

.account .rest,
.account td:last-child {
    width: 84px;
}

.account i {
    float: left;
    margin-left: 7px;
    font-style: normal;
}

.totals {
    position: absolute;
    right: 5px;
    bottom: 15px;
    color: #808080;
    font: 13px/15px "Liberation Sans", sans-serif;
    text-align: right;
}

.totals p {
    white-space: pre;
}

.totals .loss,
.info-pane .loss,
.lots {
    color: #d01020;
}

/* scales */
.scale {
    position: relative;
    padding-top: 1px;
    color: #d0a030;
    font-size: 9px;
}

.scale li {
    display: flex;
    align-items: center;
    gap: 2px;
    height: 14px;
    margin-bottom: 19px;
}

.scale li::before {
    content: "";
    width: 3px;
    height: 1px;
    background: #c9a03c;
}

.tag {
    position: absolute;
    left: 1px;
    width: 41px;
    height: 11px;
    padding-left: 4px;
    color: #fff;
    line-height: 11px;
}

.tag.ask {
    top: 320px;
    background: #d2601e;
}

.tag.bid {
    top: 403px;
    background: #daa520;
}

.info-scale {
    display: flex;
    flex-direction: column;
    justify-content: space-between;
    padding: 2px 4px;
}

.dates {
    grid-column: 1 / 3;
    display: flex;
    padding-left: 1px;
    color: #d0a030;
    font-size: 9px;
    line-height: 12px;
}

.dates li {
    flex: none;
    width: 64px;
    white-space: nowrap;
}

.dates li::before {
    content: "";
    display: block;
    width: 1px;
    height: 3px;
    background: #c9a03c;
}

/* indicator pane */
.info-pane {
    display: flex;
    flex-direction: column;
}

.info-head {
    display: flex;
    padding: 2px 0 0 4px;
    line-height: 15px;
    white-space: nowrap;
}

.info-head .name {
    width: 96px;
    color: #d0a030;
    font-size: 9px;
}

.info-head .acc {
    width: 400px;
}

.info-head .scan {
    width: 349px;
}

.info-body {
    flex: 1;
    min-height: 0;
    display: flex;
    align-items: flex-start;
    padding-left: 4px;
}

.summary {
    align-self: stretch;
    width: 116px;
    display: flex;
    flex-direction: column;
    justify-content: space-between;
    padding: 6px 0;
    line-height: 10px;
    white-space: nowrap;
}

.summary dl {
    display: grid;
    grid-template-columns: 46px auto;
}

.orders {
    width: 400px;
}

.group {
    display: grid;
    grid-template-columns: repeat(4, 80px);
    height: 73px;
    padding-top: 5px;
    font-size: 12px;
    line-height: 14px;
}

.current-orders {
    height: 66px;
    line-height: 13px;
}

.group h2,
.type {
    color: #4682b4;
}

.count,
.type {
    font-size: 11px;
    line-height: 12px;
}

.type span {
    display: inline-block;
    width: 27px;
}

.lots {
    font-size: 10px;
    line-height: 10px;
}

.lots.first {
    padding-top: 2px;
}

.lots span {
    display: inline-block;
    width: 40px;
}

.lots .mid {
    width: 34px;
}

.lots .short {
    width: 27px;
}

.days {
    border-collapse: collapse;
    font-size: 12px;
    line-height: 12px;
    text-align: left;
}

.days th,
.days td {
    height: 12px;
    padding: 0;
    font-weight: normal;
}

.days th {
    height: 20px;
}

.c-date { width: 80px; }
.c-num { width: 30px; }
.c-sum { width: 70px; }
.c-pct { width: 90px; }
.c-reb { width: 120px; }

.gain {
    color: #108010;
}

/* bottom bars */
.tabs {
    flex: none;
    height: 21px;
    display: flex;
    padding-left: 6px;
    border-top: 1px solid #000;
    color: #777;
}

.tab {
    position: relative;
    padding: 0 11px;
    height: 18px;
}

.tab:not(.active)::after {
    content: "";
    position: absolute;
    right: 0;
    top: 3px;
    height: 13px;
    border-right: 1px solid #777;
}

.tab.active {
    background: #fff;
    color: #000;
    border: 1px solid #000;
    border-top: 0;
}

.tab-scroll {
    display: flex;
    gap: 13px;
    margin-left: auto;
    padding: 0 9px 4px 0;
}

.terminal {
    flex: none;
    height: 29px;
    display: flex;
    border-top: 1px solid #fff;
    border-bottom: 1px solid #a8a8a8;
}

.terminal-side {
    width: 15px;
    display: flex;
    flex-direction: column;
    align-items: center;
    gap: 4px;
    padding-top: 5px;
}

.terminal-side .lines {
    width: 4px;
    height: 8px;
    background: repeating-linear-gradient(#a4a4a4 0 1px, #f0f0f0 1px 2px);
}

.balance {
    flex: 1;
    display: flex;
    align-items: center;
    gap: 5px;
    margin: 2px 2px 3px 0;
    padding-left: 5px;
    background: #fff;
    border: 1px solid #e2e2e2;
    border-top-color: #999;
    border-left-color: #999;
    white-space: pre;
}

.dot {
    width: 8px;
    height: 8px;
    border-radius: 50%;
    background: radial-gradient(#ccc, #888);
    border: 1px solid #777;
}

.statusbar {
    flex: none;
    height: 23px;
    display: flex;
    align-items: center;
    padding-left: 2px;
}

.help {
    flex: 1;
}

.cell {
    width: 69px;
    height: 18px;
    padding-left: 5px;
    border-left: 1px solid #a0a0a0;
    line-height: 18px;
    white-space: nowrap;
}

.cell.profile {
    width: 116px;
}

.cell.time {
    width: 102px;
}

.cell.link {
    width: 130px;
    display: flex;
    align-items: center;
    gap: 4px;
}

/* taskbar */
.taskbar {
    flex: none;
    width: 62px;
    display: flex;
    flex-direction: column;
    background: linear-gradient(to right, #56626d 0, #1b262f 4px, #1a232b 50%, #11181e);
    border-left: 1px solid #9fb2c4;
    color: #fff;
}

.start {
    height: 59px;
    border-bottom: 2px solid #8c98b4;
}

.pinned {
    display: flex;
    flex-direction: column;
    height: 248px;
}

.pinned button {
    flex: 1;
}

.running {
    display: flex;
    flex-direction: column;
    gap: 4px;
}

.running button {
    height: 44px;
    border: 1px solid #77818a;
    border-radius: 2px;
    background: linear-gradient(155deg, #7c848c 0, #3a434c 45%, #262f38 50%, #333c45);
}

.running .current {
    border-color: #e0e0e0;
    background: linear-gradient(155deg, #d0d0d0 0, #9a9a9a 45%, #808386 50%, #b0b2b4);
}

.yu {
    font: bold 13px "Liberation Sans", sans-serif;
    fill: #222;
}

.tray {
    margin-top: auto;
    display: flex;
    flex-direction: column;
    align-items: center;
    line-height: 18px;
}

.lang {
    margin-bottom: 13px;
}

.more {
    align-self: flex-start;
    margin: 0 0 13px 9px;
}

.tray-icons {
    display: grid;
    grid-template-columns: 16px 16px;
    gap: 8px;
    margin-bottom: 5px;
}

.desktop {
    height: 14px;
    background: linear-gradient(to right, #70757a, #22282e);
    border: 1px solid #4c545c;
}
```
FILE: chart.js
```js
// Each candle: high, body top, body bottom, low, 1 = closed lower
const candles = [
    [101,197,205,223,1],[149,218,239,294,1],[222,240,243,266,0],[229,243,262,292,1],[251,260,265,329,0],
    [245,264,267,294,1],[254,272,287,299,1],[272,283,303,303,0],[238,245,283,288,0],[217,246,254,275,1],
    [253,255,292,308,1],[270,282,294,304,0],[252,259,278,291,1],[259,279,281,297,1],[270,282,374,376,1],
    [346,376,390,403,1],[385,393,406,441,1],[360,362,421,437,0],[327,351,366,382,0],[343,347,354,394,0],
    [340,356,377,389,1],[307,333,381,382,0],[319,328,333,350,0],[275,302,329,337,0],[283,302,311,337,1],
    [309,311,320,349,1],[318,319,336,356,1],[264,301,334,364,0],[260,284,302,306,0],[241,255,285,292,0],
    [244,255,310,318,1],[291,308,328,341,1],[248,253,332,333,0],[234,252,286,293,1],[230,239,289,290,0],
    [235,239,282,290,1],[273,285,293,297,1],[264,291,301,314,1],[254,256,303,310,0],[236,240,259,298,0],
    [227,238,242,255,0],[206,228,240,258,0],[196,221,230,235,0],[172,179,222,227,0],[168,178,201,205,1],
    [145,151,203,210,0],[108,145,153,157,0],[112,118,145,154,0],[112,119,143,149,1],[117,146,167,176,1],
    [142,168,209,213,1],[189,208,226,227,1],[191,196,221,226,0],[155,174,197,201,0],[156,161,177,177,0],
    [150,164,175,179,1],[167,175,244,244,1],[220,234,245,259,0],[229,234,269,285,1],[248,268,287,290,1],
    [272,286,319,343,1],[316,321,344,363,1],[317,331,341,353,0],[324,331,334,364,1],[282,303,336,339,0],
    [278,304,337,348,1],[313,328,336,347,0],[291,307,331,334,0],[286,291,308,318,0],[291,294,299,325,1],
    [262,266,302,302,0],[256,269,288,291,1],[269,279,290,301,1],[266,291,296,303,1],[293,296,376,413,1],
    [363,377,403,423,1],[383,412,425,430,1],[395,399,417,428,1],[413,418,470,508,1],[437,452,475,493,0],
    [427,451,453,473,1],[390,396,456,459,0],[368,385,396,409,1],[360,361,396,401,0],[327,335,364,371,0],
    [323,335,356,369,1],[348,356,372,399,1],[333,355,380,382,0],[328,343,356,361,0],[331,342,344,357,1],
    [333,342,376,377,1],[362,366,376,392,0],[364,370,387,399,1],[384,386,441,463,1],[416,425,441,456,0],
    [394,416,426,455,0],[377,408,417,423,0],[395,411,415,452,0],[410,412,423,441,1],[414,422,454,458,1],
    [451,454,459,486,1],[390,401,460,465,0],[383,412,416,433,0],[387,408,413,430,0],[388,399,409,419,0],
    [369,393,400,409,0],[373,383,394,407,0],[342,364,369,399,1],[335,354,369,373,0],[322,332,355,373,0],
    [294,306,333,336,0],[300,306,309,341,1],[278,305,313,313,0],[286,305,327,344,1],[318,326,349,371,1],
    [342,348,390,397,1],[377,389,397,404,1],[386,397,410,415,1],[390,398,410,423,0],[382,390,399,412,0],
    [382,390,411,412,1],[408,410,433,433,1],[405,410,428,430,0],[364,375,411,427,0],[359,375,380,391,1],
    [377,379,429,440,1],[419,428,460,460,1],[449,456,471,476,1],[460,470,474,485,1],[466,473,520,525,1],
    [496,519,537,539,1],[530,536,577,592,1],[558,577,601,618,0],[534,575,578,590,0],[560,575,606,631,1],
    [577,591,606,619,0],[583,591,598,619,1],[580,592,597,600,1],[526,543,597,602,0],[522,525,544,553,0],
    [514,526,535,536,1],[505,520,535,535,0],[503,507,519,533,0],[489,507,512,513,1],[418,423,512,522,0],
    [414,423,466,466,1],[451,464,482,496,1]
];

const top0 = 74;
const step = 8;
const svg = document.getElementById('chart');

function add(name, attrs, text) {
    const el = document.createElementNS('http://www.w3.org/2000/svg', name);
    for (const key in attrs) {
        el.setAttribute(key, attrs[key]);
    }
    if (text) {
        el.textContent = text;
    }
    svg.appendChild(el);
}

function level(y, color, dash) {
    add('line', { x1: 0, x2: '100%', y1: y - top0 + 0.5, y2: y - top0 + 0.5, stroke: color, 'stroke-dasharray': dash });
}

candles.forEach(function (c, i) {
    const x = i * step;
    add('rect', { x: x, y: c[0] - top0, width: 1, height: c[3] - c[0], fill: '#000' });
    add('rect', {
        x: x - 1.5, y: c[1] - top0 + 0.5, width: 4, height: c[2] - c[1] - 1,
        fill: c[4] ? '#a0a0a0' : '#fff', stroke: '#000'
    });
});

// ask line, bid line, open orders
level(399, '#d2691e', '3 3');
level(481, '#b4bab4', 'none');
[[483, '#40709557'], [508, '#40671867'], [525, '#40652652']].forEach(function (o) {
    level(o[0], '#1e7024', '9 6 3 6');
    add('text', { x: 6, y: o[0] - top0 - 2, class: 'order-label' }, o[1] + ' sell 0.10');
});

// price arrow
add('line', { x1: 1169, x2: 1179, y1: 431.5, y2: 431.5, stroke: '#a82848' });
add('rect', { x: 1179.5, y: 425.5, width: 41, height: 12, fill: 'none', stroke: '#a82848' });
add('text', { x: 1180, y: 436, class: 'arrow-label' }, '143.204');
```
